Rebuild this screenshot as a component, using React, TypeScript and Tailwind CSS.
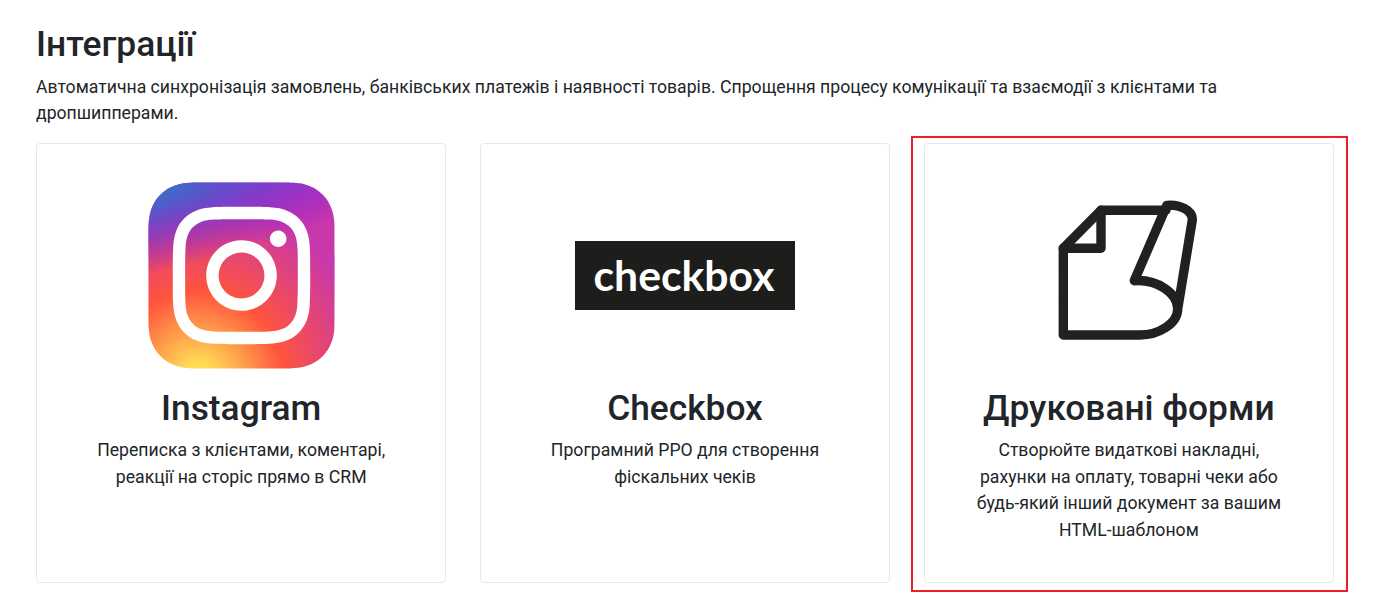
import React from 'react'

interface Integration {
  title: string
  description: string
  logo: React.ReactNode
  isHighlighted?: boolean
}

function InstagramLogo() {
  return (
    <svg viewBox="0 0 132 132" className="h-[189px] w-[189px]">
      <defs>
        <radialGradient
          id="ig-warm"
          cx="158.429"
          cy="578.088"
          r="65"
          gradientUnits="userSpaceOnUse"
          gradientTransform="matrix(0 -1.98198 1.8439 0 -1031.402 454.004)"
        >
          <stop offset="0" stopColor="#fd5" />
          <stop offset=".1" stopColor="#fd5" />
          <stop offset=".5" stopColor="#ff543e" />
          <stop offset="1" stopColor="#c837ab" />
        </radialGradient>
        <radialGradient
          id="ig-cool"
          cx="147.694"
          cy="473.455"
          r="65"
          gradientUnits="userSpaceOnUse"
          gradientTransform="matrix(.17394 .86872 -3.5818 .71718 1648.348 -458.493)"
        >
          <stop offset="0" stopColor="#3771c8" />
          <stop offset=".128" stopColor="#3771c8" />
          <stop offset="1" stopColor="#60f" stopOpacity="0" />
        </radialGradient>
        <path
          id="ig-tile"
          transform="translate(1 1)"
          d="M65.03 0C37.888 0 29.95.028 28.407.156c-5.57.463-9.036 1.34-12.812 3.22-2.91 1.445-5.205 3.12-7.47 5.468C4 13.126 1.5 18.394.595 24.656c-.44 3.04-.568 3.66-.594 19.188-.01 5.176 0 11.988 0 21.125 0 27.12.03 35.05.16 36.59.45 5.42 1.3 8.83 3.1 12.56 3.44 7.14 10.01 12.5 17.75 14.5 2.68.69 5.64 1.07 9.44 1.25 1.61.07 18.02.12 34.44.12 16.42 0 32.84-.02 34.41-.1 4.4-.207 6.955-.55 9.78-1.28 7.79-2.01 14.24-7.29 17.75-14.53 1.765-3.64 2.66-7.18 3.065-12.317.088-1.12.125-18.977.125-36.81 0-17.836-.04-35.66-.128-36.78-.41-5.22-1.305-8.73-3.127-12.44-1.495-3.037-3.155-5.305-5.565-7.624C116.9 4 111.64 1.5 105.372.596 102.335.157 101.73.027 86.19 0H65.03z"
        />
      </defs>
      <use href="#ig-tile" fill="url(#ig-warm)" />
      <use href="#ig-tile" fill="url(#ig-cool)" />
      <path
        fill="#fff"
        d="M66.004 18c-13.036 0-14.672.057-19.792.29-5.11.234-8.598 1.043-11.65 2.23-3.157 1.226-5.835 2.866-8.503 5.535-2.67 2.668-4.31 5.346-5.54 8.502-1.19 3.053-2 6.542-2.23 11.65C18.06 51.327 18 52.964 18 66s.058 14.667.29 19.787c.235 5.11 1.044 8.598 2.23 11.65 1.227 3.157 2.867 5.835 5.536 8.503 2.667 2.67 5.345 4.314 8.5 5.54 3.054 1.187 6.543 1.996 11.652 2.23 5.12.233 6.755.29 19.79.29 13.037 0 14.668-.057 19.788-.29 5.11-.234 8.602-1.043 11.656-2.23 3.156-1.226 5.83-2.87 8.497-5.54 2.67-2.668 4.31-5.346 5.54-8.502 1.18-3.053 1.99-6.542 2.23-11.65.23-5.12.29-6.752.29-19.788 0-13.036-.06-14.672-.29-19.792-.24-5.11-1.05-8.598-2.23-11.65-1.23-3.157-2.87-5.835-5.54-8.503-2.67-2.67-5.34-4.31-8.5-5.535-3.06-1.187-6.55-1.996-11.66-2.23-5.12-.233-6.75-.29-19.79-.29zm-4.306 8.65c1.278-.002 2.704 0 4.306 0 12.816 0 14.335.046 19.396.276 4.68.214 7.22.996 8.912 1.653 2.24.87 3.837 1.91 5.516 3.59 1.68 1.68 2.72 3.28 3.592 5.52.657 1.69 1.44 4.23 1.653 8.91.23 5.06.28 6.58.28 19.39s-.05 14.33-.28 19.39c-.214 4.68-.996 7.22-1.653 8.91-.87 2.24-1.912 3.835-3.592 5.514-1.68 1.68-3.275 2.72-5.516 3.59-1.69.66-4.232 1.44-8.912 1.654-5.06.23-6.58.28-19.396.28-12.817 0-14.336-.05-19.396-.28-4.68-.216-7.22-.998-8.913-1.655-2.24-.87-3.84-1.91-5.52-3.59-1.68-1.68-2.72-3.276-3.592-5.517-.657-1.69-1.44-4.23-1.653-8.91-.23-5.06-.276-6.58-.276-19.398s.046-14.33.276-19.39c.214-4.68.996-7.22 1.653-8.912.87-2.24 1.912-3.84 3.592-5.52 1.68-1.68 3.28-2.72 5.52-3.592 1.692-.66 4.233-1.44 8.913-1.655 4.428-.2 6.144-.26 15.09-.27zm29.928 7.97c-3.18 0-5.76 2.577-5.76 5.758 0 3.18 2.58 5.76 5.76 5.76 3.18 0 5.76-2.58 5.76-5.76 0-3.18-2.58-5.76-5.76-5.76zm-25.622 6.73c-13.613 0-24.65 11.037-24.65 24.65 0 13.613 11.037 24.645 24.65 24.645C79.617 90.645 90.65 79.613 90.65 66S79.616 41.35 66.003 41.35zm0 8.65c8.836 0 16 7.163 16 16 0 8.836-7.164 16-16 16-8.837 0-16-7.164-16-16 0-8.837 7.163-16 16-16z"
      />
    </svg>
  )
}

function CheckboxLogo() {
  return (
    <div className="flex h-[69px] w-[220px] items-center justify-center bg-[#1d1d1b] pr-0.5 pb-0.5 font-['Lato',sans-serif] text-[42.7px] leading-none font-bold text-white">
      checkbox
    </div>
  )
}

function PaperLogo() {
  return (
    <svg
      viewBox="0 0.5 220 220"
      className="h-[220px] w-[220px]"
      fill="none"
      stroke="#212121"
      strokeWidth="9.4"
      strokeLinecap="round"
      strokeLinejoin="round"
    >
      <path d="M147 44.8H82L44.3 82.8V169.5H121C139 169.5 158.7 158.5 158.7 143.5C158.7 128 138.5 113.5 115.3 115.2L147.8 39.8C160 38.5 173.8 44.5 173.3 54.5L158.7 143.5" />
      <path d="M82 44.8V82.8H44.3" />
    </svg>
  )
}

const integrations: Array<Integration> = [
  {
    title: 'Instagram',
    description: 'Переписка з клієнтами, коментарі, реакції на сторіс прямо в CRM',
    logo: <InstagramLogo />,
  },
  {
    title: 'Checkbox',
    description: 'Програмний РРО для створення фіскальних чеків',
    logo: <CheckboxLogo />,
  },
  {
    title: 'Друковані форми',
    description:
      'Створюйте видаткові накладні, рахунки на оплату, товарні чеки або будь-який інший документ за вашим HTML-шаблоном',
    logo: <PaperLogo />,
    isHighlighted: true,
  },
]

function IntegrationCard({ title, description, logo, isHighlighted }: Integration) {
  return (
    <article className="relative flex h-[440px] flex-col items-center rounded-[4px] border border-[#e7e8e9] px-12 pt-[22px] text-center">
      <div className="mb-px flex h-[220px] w-[220px] items-center justify-center">{logo}</div>
      <h2 className="mt-[0.3px] mb-[7.7px] text-[35.3px] leading-[42.4px] font-medium whitespace-nowrap">
        {title}
      </h2>
      <p>{description}</p>
      {isHighlighted && (
        <div className="pointer-events-none absolute -top-[8px] -right-[15px] -bottom-[10px] -left-[14px] border-2 border-[#ea1f27]" />
      )}
    </article>
  )
}

export default function App() {
  return (
    <main className="h-[606px] overflow-hidden bg-white pt-[22.7px] pr-[66px] pl-9 font-['Roboto',sans-serif] text-[17.65px] leading-[26.45px] text-[#212529]">
      <h1 className="mb-[8.6px] text-[35.4px] leading-[42.4px] font-medium">Інтеграції</h1>
      <p className="mb-[16.3px] w-[1240px]">
        Автоматична синхронізація замовлень, банківських платежів і наявності товарів. Спрощення
        процесу комунікації та взаємодії з клієнтами та дропшипперами.
      </p>
      <section className="grid grid-cols-3 gap-[33.5px]">
        {integrations.map((integration) => {
          return <IntegrationCard key={integration.title} {...integration} />
        })}
      </section>
    </main>
  )
}
